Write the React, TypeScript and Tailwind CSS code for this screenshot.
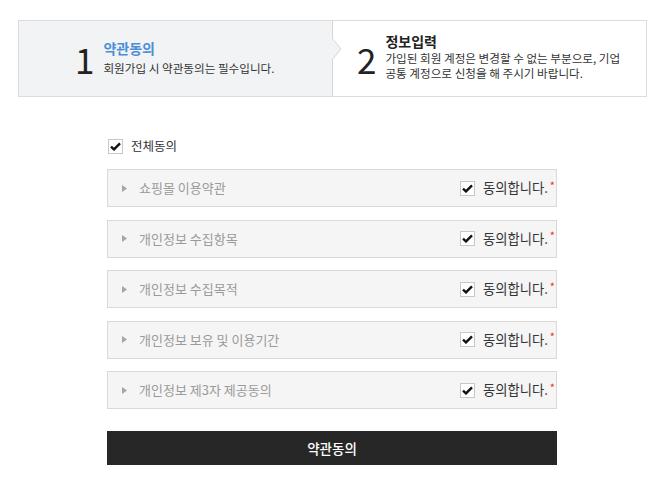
const font = { fontFamily: '"Noto Sans CJK KR", "Noto Sans", sans-serif' }

const terms = [
  '쇼핑몰 이용약관',
  '개인정보 수집항목',
  '개인정보 수집목적',
  '개인정보 보유 및 이용기간',
  '개인정보 제3자 제공동의',
]

function Check() {
  return (
    <span className="flex h-[15px] w-[15px] items-center justify-center border border-[#c8c8c8] bg-white">
      <svg width="11" height="9" viewBox="0 0 11 9">
        <path d="M1 4.6 L4 7.4 L10 1.4" fill="none" stroke="#111" strokeWidth="2.4" />
      </svg>
    </span>
  )
}

export default function App() {
  return (
    <div className="min-h-[487px] w-[669px] bg-white pt-[20px] text-[#333]" style={font}>
      <div className="ml-[18px] flex h-[77px] w-[629px] border border-[#dcdcdc]">
        <div className="relative flex w-[314px] items-center border-r border-[#d6d6d6] bg-[#f2f3f5] pl-[56px]">
          <span className="mr-[9px] text-[35px] font-normal leading-none text-[#222]">1</span>
          <div className="-mt-[2px]">
            <div className="text-[14px] font-bold leading-[17px] text-[#4a8fd6]">약관동의</div>
            <div className="mt-[4px] text-[11.6px] leading-[14px] text-[#333]">회원가입 시 약관동의는 필수입니다.</div>
          </div>
          <svg className="absolute right-[-10px] top-[17px]" width="10" height="22" viewBox="0 0 10 22">
            <path d="M0 0 L9 11 L0 22" fill="#f2f3f5" stroke="#d6d6d6" strokeWidth="1" />
          </svg>
        </div>
        <div className="flex flex-1 items-center pl-[24px]">
          <span className="mr-[9px] text-[35px] font-normal leading-none text-[#222]">2</span>
          <div className="-mt-[4px]">
            <div className="text-[14px] font-bold leading-[17px] text-[#222]">정보입력</div>
            <div className="mt-[1px] text-[11.6px] leading-[15px] text-[#333]">
              가입된 회원 계정은 변경할 수 없는 부분으로, 기업
              <br />
              공통 계정으로 신청을 해 주시기 바랍니다.
            </div>
          </div>
        </div>
      </div>

      <div className="ml-[107px] mt-[41px] w-[450px]">
        <label className="flex items-center pl-[1px]">
          <Check />
          <span className="ml-[8px] text-[12.5px] leading-[16px] text-[#333]">전체동의</span>
        </label>

        <div className="mt-[15px] flex flex-col gap-[12.5px]">
          {terms.map((t) => (
            <div
              key={t}
              className="flex h-[38px] items-center border border-[#d9d9d9] bg-[#f5f5f5] pl-[14px] pr-[1px]"
            >
              <svg width="5" height="7" viewBox="0 0 5 7" className="mr-[12px]">
                <path d="M0 0 L5 3.5 L0 7 Z" fill="#a5a5a5" />
              </svg>
              <span className="flex-1 text-[13px] text-[#9a9a9a]">{t}</span>
              <Check />
              <span className="ml-[8px] text-[13.3px] text-[#333]">동의합니다.</span>
              <span className="-mt-[6px] ml-[2px] text-[11px] text-[#e0322f]">*</span>
            </div>
          ))}
        </div>

        <button className="mt-[22px] flex h-[34px] w-full items-center justify-center bg-[#272727] text-[13.5px] font-medium text-white">
          약관동의
        </button>
      </div>
    </div>
  )
}
